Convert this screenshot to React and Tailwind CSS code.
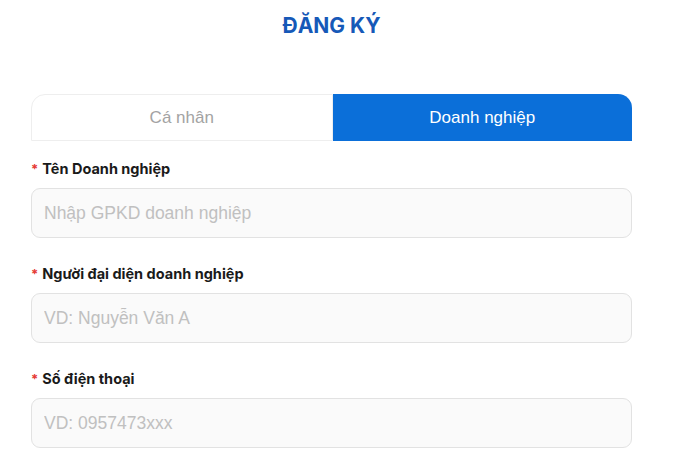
export default function App() {
  const fields = [
    { label: "Tên Doanh nghiệp", ph: "Nhập GPKD doanh nghiệp" },
    { label: "Người đại diện doanh nghiệp", ph: "VD: Nguyễn Văn A" },
    { label: "Số điện thoại", ph: "VD: 0957473xxx" },
  ];
  return (
    <div className="w-[680px] h-[453px] overflow-hidden bg-white" style={{ fontFamily: "Inter, 'Liberation Sans', sans-serif" }}>
      <div className="w-[601px] ml-[31px]">
        <h1 className="text-center text-[21px] font-bold text-[#1659b8] pt-[13px] leading-[26px]">ĐĂNG KÝ</h1>
        <div className="flex mt-[55px] h-[47px]">
          <div className="flex-1 flex items-center justify-center border border-[#eeeeee] rounded-tl-[14px] text-[17px] text-[#a3a3a3]" style={{ fontFamily: "'Liberation Sans', Arial, sans-serif" }}>Cá nhân</div>
          <div className="flex-1 flex items-center justify-center bg-[#0b6fd9] rounded-tr-[14px] text-[17px] text-white" style={{ fontFamily: "'Liberation Sans', Arial, sans-serif" }}>Doanh nghiệp</div>
        </div>
        <div className="flex flex-col gap-[26px] mt-[18px]">
          {fields.map((f) => (
            <div key={f.label} className="flex flex-col">
              <label className="text-[14.5px] font-bold text-[#1a1a1a] leading-[20px] h-[20px]">
                <span className="text-[#e53935] mr-[4px] text-[13px]">*</span>
                {f.label}
              </label>
              <input
                className="mt-[9px] h-[50px] w-full rounded-[9px] border border-[#e2e2e2] bg-[#fafafa] px-[12px] text-[17.5px] outline-none placeholder:text-[#c0c0c0]"
                style={{ fontFamily: "'Liberation Sans', Arial, sans-serif" }}
                placeholder={f.ph}
              />
            </div>
          ))}
        </div>
      </div>
    </div>
  );
}
